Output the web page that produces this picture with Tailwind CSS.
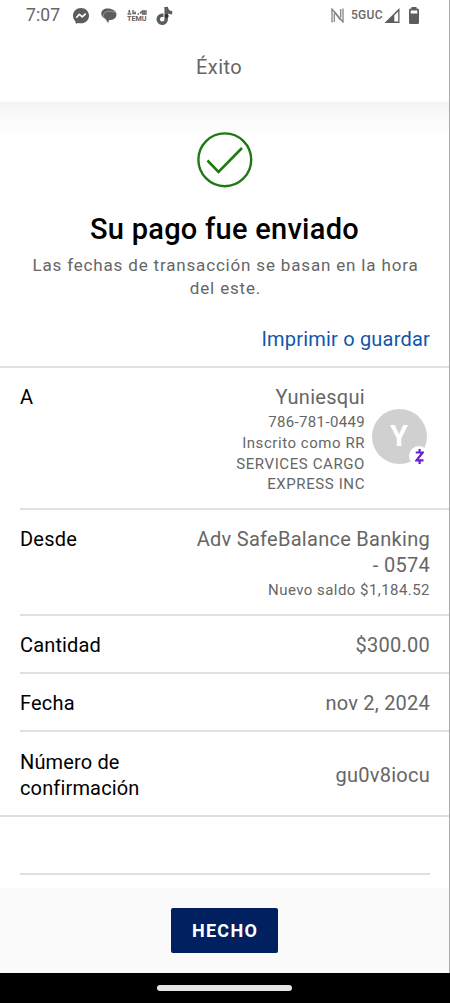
<!DOCTYPE html>
<html lang="es">
<head>
<meta charset="utf-8">
<title>Éxito</title>
<script src="https://cdn.jsdelivr.net/npm/@tailwindcss/browser@4"></script>
</head>
<body class="bg-white">
<div class="relative flex h-[1003px] w-[450px] flex-col overflow-hidden bg-white font-['Roboto',sans-serif] text-[#666]">
  <header class="flex h-[102px] shrink-0 flex-col">
    <div class="flex h-[31px] items-center justify-between pl-[26px] pr-[31px]">
      <div class="flex items-center">
        <span class="w-[47px] text-[17.5px] leading-[31px] tracking-[0.15px] whitespace-nowrap">7:07</span>
        <svg class="h-4 w-4" viewBox="0 0 16 16"><path fill="#5d5d5d" d="M8 0C3.5 0 0 3.3 0 7.700c0 2.300 1 4.300 2.500 5.700l.1 1.600c0 .5.500.8 1 .6l1.700-.7c.8.3 1.700.4 2.700.4 4.500 0 8-3.200 8-7.600S12.500 0 8 0z"/><path fill="none" stroke="#fff" stroke-width="1.700" stroke-linejoin="round" d="M3.300 9.800 6.300 6.300l3 2.600 3.400-3.200"/></svg>
        <svg class="ml-3 h-4 w-4" viewBox="0 0 16 16"><path fill="#5d5d5d" d="M6.500.5C3 .5.300 2.500.300 5.500c0 2.600 1.500 4.300 4 5.200l2.900 4.600.6-3.100c4.300 0 7.700-2 7.700-5.700 0-3.600-4-6-9-6z"/><path fill="none" stroke="#b5b5b5" stroke-width=".7" d="M2.800 9.500C1.500 5.500 4.200 3.300 8.500 3.200c2.500 0 4.400.4 5.900 1.300"/></svg>
        <svg class="ml-[10px] h-4 w-[20px]" viewBox="0 0 20 16"><g fill="none" stroke="#666" stroke-width="1.400"><path d="M.5 6h3.800M1.300 4h2M2.300 2v2M6 2v4.300M6 5.500h3M8 3.500v2M10.500 6h1.500M13 5.500l1.700-2M15.500 3h3.500v3h-3.500zM17.200 3v3"/></g><text x="0" y="13" textLength="19.500" lengthAdjust="spacingAndGlyphs" font-family="Roboto" font-size="7" font-weight="700" fill="#5d5d5d">TEMU</text></svg>
        <svg class="ml-[9px] h-[20px] w-[17px]" viewBox="0 0 17 20"><path fill="none" stroke="#5d5d5d" stroke-width="3.500" d="M10.200 1v12.500a4 4 0 1 1-4-4.200h1.300"/><path fill="none" stroke="#5d5d5d" stroke-width="3.300" d="M10.200 1c.4 3.800 2.500 5.700 6 5.900"/><circle cx="10.700" cy="10" r="2" fill="#333"/></svg>
      </div>
      <div class="flex items-center">
        <svg class="h-[15px] w-[13px]" viewBox="0 0 13 15"><path fill="none" stroke="#858585" stroke-width="1.300" d="M1 14.500V1L9.500 12M3.300 14V5.500M3.300 3.500 12 14V.5M9.700 1v8.500"/></svg>
        <span class="ml-[7px] w-[33px] text-[12px] leading-[31px] font-medium tracking-[0.3px] whitespace-nowrap">5GUC</span>
        <svg class="h-[15px] w-[16px]" viewBox="0 0 16 15"><path fill="#5d5d5d" d="M.5 15 15.500 0v15z"/><path fill="#fff" d="M10.300 7.300 14.200 3.500v10h-3.900z"/></svg>
        <svg class="ml-[9px] h-[17px] w-[10px]" viewBox="0 0 10 17"><rect x="2.500" width="5" height="3" fill="#5d5d5d"/><rect y="1.500" width="10" height="15.500" rx="1.500" fill="#5d5d5d"/><rect x="1.700" y="3.500" width="6.600" height="3" fill="#fff"/></svg>
      </div>
    </div>
    <h1 class="pr-3 pt-[23px] text-center text-[20px] leading-[26px] tracking-[0.4px]">Éxito</h1>
  </header>

  <main class="flex h-[786px] shrink-0 flex-col">
    <div class="h-[30px] bg-linear-to-b from-[#f3f3f3] via-[#fafafa] via-50% to-[#fdfdfd]"></div>
    <svg class="ml-[197px] h-[56px] w-[56px]" viewBox="0 0 56 56" fill="none" stroke="#1d7a10"><circle cx="27.800" cy="27.800" r="26.400" stroke-width="2.400"/><path stroke-width="2.600" d="M10.500 28.500 21.500 40 45 16"/></svg>
    <h2 class="mt-[23px] pr-px text-center text-[29px] leading-[36px] font-medium tracking-[0.27px] text-black whitespace-nowrap">Su pago fue enviado</h2>
    <p class="mt-[7px] pl-px text-center text-[17px] leading-[23px] tracking-[0.83px]">Las fechas de transacción se basan en la hora<br>del este.</p>
    <a class="mt-[25px] mr-[20px] h-[41px] text-right text-[20px] leading-[28px] tracking-[0.2px] text-[#1156a8] whitespace-nowrap">Imprimir o guardar</a>

    <div class="flex h-[142px] shrink-0 border-t-2 border-[#e0e0e0] pl-[20px] pt-[15px] pr-[22px]">
      <span class="text-[20px] leading-[28px] text-black">A</span>
      <div class="ml-auto flex flex-col items-end text-[15px] leading-[20px] tracking-[0.6px] whitespace-nowrap">
        <span class="text-[20px] leading-[28px] tracking-[0.3px]">Yuniesqui</span>
        <span class="leading-[22px] tracking-[0.35px]">786-781-0449</span>
        <span class="leading-[21px] tracking-[0.55px]">Inscrito como RR</span>
        <span>SERVICES CARGO</span>
        <span>EXPRESS INC</span>
      </div>
      <div class="relative mt-[26px] mr-px ml-[7px] flex h-[55px] w-[55px] items-center justify-center rounded-full bg-[#d0d0d0] pr-px text-[29px] font-bold text-white">Y
        <div class="absolute top-[37px] left-[37px] flex h-[20px] w-[20px] items-center justify-center rounded-full bg-white">
          <svg class="h-[15px] w-[9px]" viewBox="0 0 9 15"><path fill="none" stroke="#6a1fd0" stroke-width="2.200" d="M.7 3.500h7L1.500 11.300H8.500M4.600 0v3.500M4.600 11v4"/></svg>
        </div>
      </div>
    </div>

    <div class="ml-[20px] flex h-[106px] shrink-0 justify-between border-t-2 border-[#e0e0e0] pt-[16px] pr-[20px] text-[20px] leading-[26px]">
      <span class="tracking-[0.2px] text-black">Desde</span>
      <div class="text-right tracking-[0.28px]">Adv SafeBalance Banking<br>- 0574<div class="text-[15px] leading-[24px] tracking-[0.45px]">Nuevo saldo $1,184.52</div></div>
    </div>
    <div class="ml-[20px] flex h-[58px] shrink-0 items-center justify-between border-t-2 border-[#e0e0e0] pt-[2px] pr-[20px] text-[20px]">
      <span class="tracking-[0.15px] text-black">Cantidad</span><span class="tracking-[0.25px]">$300.00</span>
    </div>
    <div class="ml-[20px] flex h-[58px] shrink-0 items-center justify-between border-t-2 border-[#e0e0e0] pt-[2px] pr-[20px] text-[20px]">
      <span class="tracking-[0.2px] text-black">Fecha</span><span class="tracking-[0.22px]">nov 2, 2024</span>
    </div>
    <div class="ml-[20px] flex h-[85px] shrink-0 items-center justify-between border-t-2 border-[#e0e0e0] pt-[3px] pr-[20px] text-[20px] leading-[26px]">
      <span class="tracking-[0.15px] text-black">Número de<br>confirmación</span><span class="tracking-[0.25px]">gu0v8iocu</span>
    </div>
    <div class="h-[58px] shrink-0 border-t-2 border-[#e0e0e0]"></div>
    <div class="mx-[20px] shrink-0 border-t-2 border-[#e0e0e0]"></div>
  </main>

  <footer class="flex h-[85px] shrink-0 justify-center bg-[#fafafa] pt-[20px]">
    <button class="mr-px h-[45px] w-[107px] rounded-[2px] bg-[#00205f] pl-px text-[18px] font-bold tracking-[1.3px] text-white">HECHO</button>
  </footer>
  <div class="flex h-[30px] shrink-0 justify-center bg-black pt-[12px]"><div class="mr-px h-[6px] w-[135px] rounded-full bg-[#e6e6e6]"></div></div>
  <div class="absolute top-0 right-0 h-[973px] w-px bg-[#aaa]"></div>
</div>
</body>
</html>
